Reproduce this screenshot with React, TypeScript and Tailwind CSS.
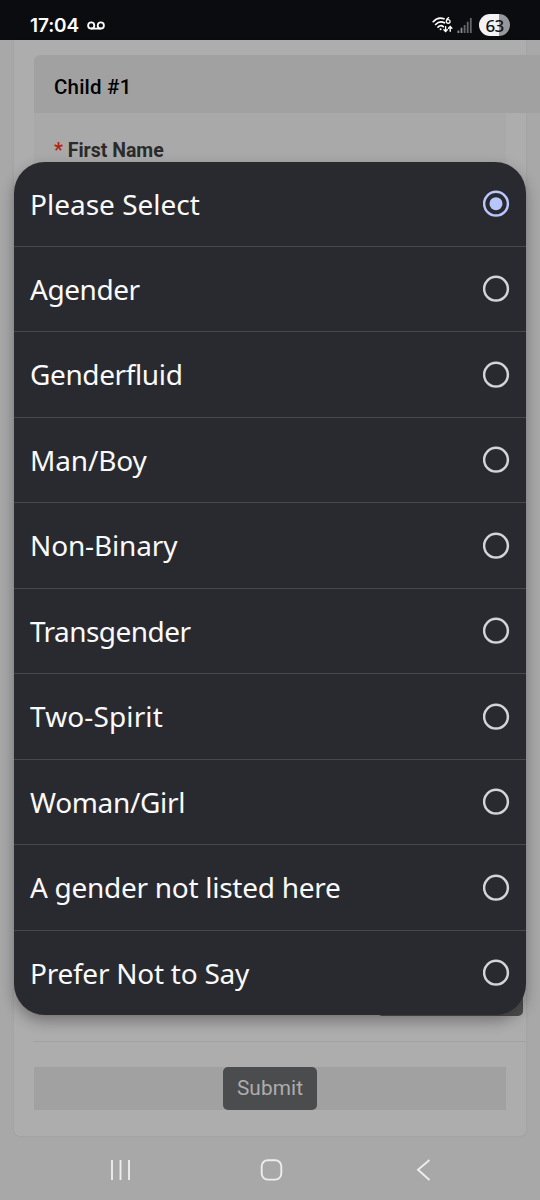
import React from 'react';

interface Option {
  label: string;
  tracking: string;
}

const OPTIONS: Option[] = [
  { label: 'Please Select', tracking: 'tracking-[0px]' },
  { label: 'Agender', tracking: 'tracking-[-0.45px]' },
  { label: 'Genderfluid', tracking: 'tracking-[-0.38px]' },
  { label: 'Man/Boy', tracking: 'tracking-[-0.15px]' },
  { label: 'Non-Binary', tracking: 'tracking-[-0.15px]' },
  { label: 'Transgender', tracking: 'tracking-[-0.55px]' },
  { label: 'Two-Spirit', tracking: 'tracking-[0.12px]' },
  { label: 'Woman/Girl', tracking: 'tracking-[-0.33px]' },
  { label: 'A gender not listed here', tracking: 'tracking-[-0.28px]' },
  { label: 'Prefer Not to Say', tracking: 'tracking-[-0.25px]' },
];

const StatusBar: React.FC = () => (
  <header className="flex h-10 shrink-0 items-center bg-[#0b0c10] pt-[10px] pr-[30px] pl-[30px] text-white">
    <span className="font-['Inter',sans-serif] text-[19px] leading-none font-semibold tracking-[-0.1px]">
      17:04
    </span>
    <svg
      className="ml-2 h-[9px] w-[18px]"
      viewBox="0 0 18 9"
      fill="none"
      stroke="currentColor"
      strokeWidth="1.8"
    >
      <circle cx="4.2" cy="4.4" r="3.1" />
      <circle cx="13.8" cy="4.4" r="3.1" />
      <path d="M4.2 7.6h9.6" />
    </svg>

    <svg
      className="ml-auto h-[18px] w-[22px]"
      viewBox="0 0 22 18"
      fill="none"
      stroke="currentColor"
      strokeLinecap="round"
    >
      <path d="M1.2 5.7C4.3 2.2 8.6 1.4 12 2.8" strokeWidth="1.7" />
      <path d="M3.6 8.5C6.2 5.8 9.8 5.3 12.4 6.8" strokeWidth="1.7" />
      <path d="M6 11.1c1.8-1.8 3.8-1.8 5.3-.5" strokeWidth="1.7" />
      <circle cx="8.6" cy="13.2" r="1" fill="currentColor" stroke="none" />
      <path
        d="M16.6 1.6c-1.6.8-2.3 2-2.3 3.7M14.3 5.5a1.9 1.8 0 1 0 3.8 0 1.9 1.8 0 1 0-3.8 0"
        strokeWidth="1.3"
      />
      <path
        d="M13.6 10.8v4.4M11.9 13.7l1.7 1.8 1.7-1.8M18.2 15.2v-4.4M16.5 12.3l1.7-1.8 1.7 1.8"
        strokeWidth="1.4"
      />
    </svg>
    <svg className="ml-[3px] h-[15px] w-[15px]" viewBox="0 0 15 15">
      <path d="M.5 12.5h1.8V15H.5zM3.6 9.8h1.8V15H3.6z" fill="#8b8c8f" />
      <path d="M6.7 7h1.8v8H6.7zM9.8 3.8h1.8V15H9.8zM12.9 0h1.8v15h-1.8z" fill="#66676a" />
    </svg>
    <span className="ml-[7px] flex h-[22px] w-[31px] items-center justify-center rounded-full bg-linear-to-r from-[#f3f3f5] from-[63%] to-[#98989a] to-[63%] font-['Noto_Sans',sans-serif] text-[17px] leading-none font-medium tracking-[-0.8px] text-[#111216]">
      63
    </span>
  </header>
);

const FormPage: React.FC = () => (
  <main className="mx-[14px] flex h-[1096px] shrink-0 flex-col rounded-b-md bg-[#adadad] pl-5 font-['Roboto',sans-serif] shadow-[0_0_2px_rgba(0,0,0,0.1)]">
    <div className="mt-[15px] -mr-[14px] flex h-[58px] shrink-0 items-center rounded-tl-md bg-[#a1a1a1] pt-[6px] pl-5 text-[20.5px] font-medium tracking-[0.2px] text-black">
      Child #1
    </div>
    <div className="mr-5 h-[915px] shrink-0 bg-[#a9a9a9] pt-[23px] pl-5 text-[19.5px] font-bold text-[#2b2b2b]">
      <span className="text-[#b32310]">*</span> First Name
    </div>
    <div className="-mt-[55px] mr-[3px] h-[43px] w-[146px] shrink-0 self-end rounded-[5px] bg-[#4b4c4e]" />
    <div className="h-[26px] shrink-0 border-b border-[#a2a2a2] bg-[#adadad]" />
    <div className="mt-[25px] mr-5 flex h-[43px] shrink-0 justify-center bg-[#a1a1a1]">
      <button className="w-[94px] rounded-[5px] bg-[#4b4c4e] text-[20.8px] tracking-[0.1px] text-[#adadad]">
        Submit
      </button>
    </div>
  </main>
);

const NavBar: React.FC = () => (
  <nav className="flex h-16 shrink-0 items-center pt-1 pr-[109px] pl-[110px] text-[#ededed]">
    <svg className="h-[22px] w-5" viewBox="0 0 20 22" stroke="currentColor" strokeWidth="1.9">
      <path d="M2 1v20M10.5 1v20M19 1v20" />
    </svg>
    <svg
      className="ml-[130px] h-[22px] w-[23px]"
      viewBox="0 0 23 22"
      fill="none"
      stroke="currentColor"
      strokeWidth="1.9"
    >
      <rect x="1.7" y="1.2" width="19.6" height="19.4" rx="6" />
    </svg>
    <svg
      className="ml-auto h-[22px] w-[15px]"
      viewBox="0 0 15 22"
      fill="none"
      stroke="currentColor"
      strokeWidth="1.9"
    >
      <path d="M13.5 1L2 10.8 13.5 21" />
    </svg>
  </nav>
);

const Radio: React.FC<{ checked: boolean }> = ({ checked }) => (
  <svg className="h-[27px] w-[27px] shrink-0" viewBox="0 0 27 27" fill="none">
    <circle
      cx="13"
      cy="13.7"
      r="11.9"
      stroke={checked ? '#b9c6fb' : '#d4d4d8'}
      strokeWidth="2.5"
    />
    {checked && <circle cx="13" cy="13.7" r="6.5" fill="#b9c6fb" />}
  </svg>
);

export default function App() {
  const [selected, setSelected] = React.useState(0);

  return (
    <div className="relative flex h-[1200px] w-[540px] flex-col overflow-hidden bg-[#a8a8a8]">
      <StatusBar />
      <FormPage />
      <NavBar />

      <div
        role="radiogroup"
        className="absolute top-[161.5px] left-[14px] w-[512px] overflow-hidden rounded-[31px] bg-[#292a2f] shadow-[0_6px_14px_rgba(40,30,30,0.4)]"
      >
        {OPTIONS.map((option, i) => (
          <button
            key={option.label}
            role="radio"
            aria-checked={i === selected}
            onClick={() => setSelected(i)}
            className="flex h-[85.5px] w-full items-center justify-between border-b border-[#47484c] pr-4 pl-4 text-left first:h-[85px] last:h-[84.5px] last:border-b-0"
          >
            <span
              className={`font-['Noto_Sans',sans-serif] text-[28px] leading-none whitespace-nowrap text-[#fafafc] ${option.tracking}`}
            >
              {option.label}
            </span>
            <Radio checked={i === selected} />
          </button>
        ))}
      </div>
    </div>
  );
}
